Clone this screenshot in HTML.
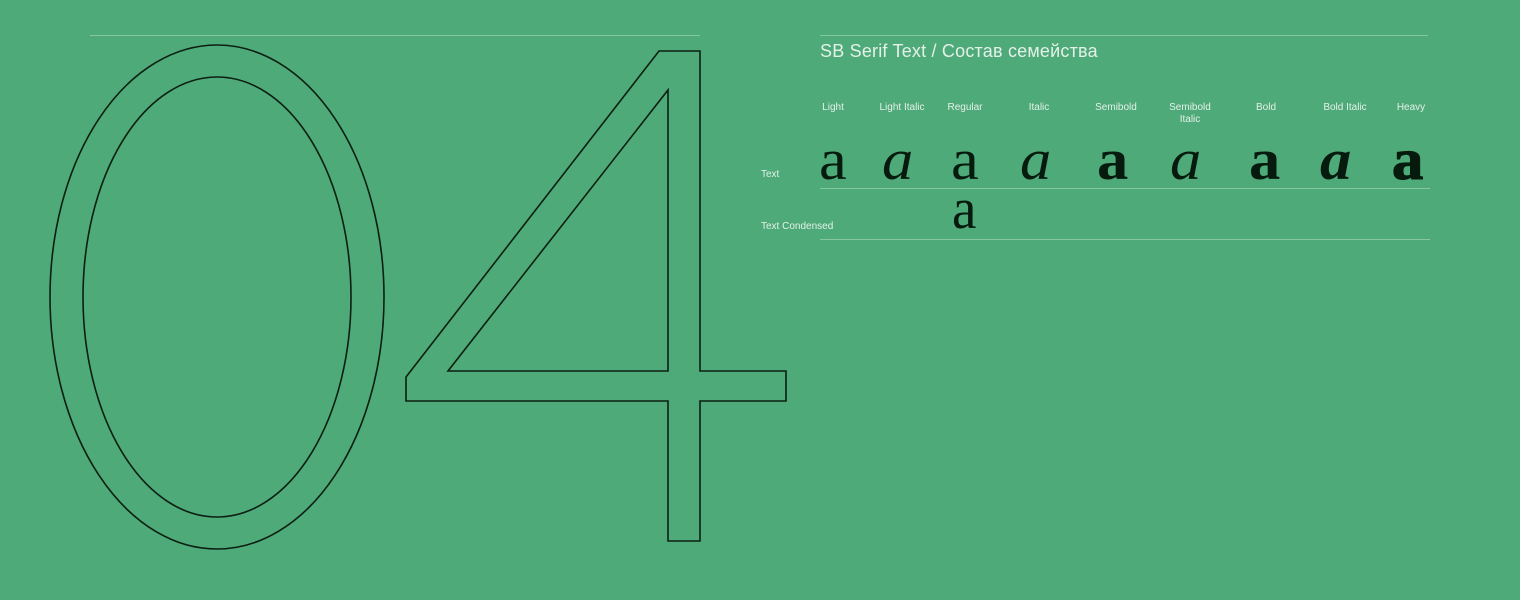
<!DOCTYPE html>
<html><head><meta charset="utf-8"><style>
html,body{margin:0;padding:0}
body{width:1520px;height:600px;background:#4eaa78;position:relative;overflow:hidden;font-family:"Liberation Sans",sans-serif}
.l{position:absolute;height:1px;background:#86c7a2}
.t{position:absolute;color:#e4f1e9}
.lab{position:absolute;top:102px;font-size:10px;color:#e4f1e9;text-align:center;width:80px;line-height:12px}
.a{position:absolute;top:131px;font-family:"Liberation Serif",serif;font-size:58px;line-height:58px;color:#061a0e;transform:scaleX(1.08);transform-origin:left}
</style></head><body>
<div class="l" style="left:90px;top:35px;width:610px"></div>
<div class="l" style="left:820px;top:35px;width:608px"></div>
<div class="l" style="left:820px;top:188px;width:610px"></div>
<div class="l" style="left:820px;top:239px;width:610px"></div>
<svg width="1520" height="600" style="position:absolute;left:0;top:0" fill="none" stroke="#0c1f12" stroke-width="1.6">
<ellipse cx="217" cy="297" rx="167" ry="252"/>
<ellipse cx="217" cy="297" rx="134" ry="220"/>
<path d="M659 51 L700 51 L700 371 L786 371 L786 401 L700 401 L700 541 L668 541 L668 401 L406 401 L406 377 Z"/>
<path d="M668 90 L668 371 L448 371 Z"/>
</svg>
<div class="t" style="left:820px;top:40px;font-size:18px;line-height:22px;letter-spacing:0.2px">SB Serif Text / Состав семейства</div>
<div class="lab" style="left:793px">Light</div>
<div class="lab" style="left:862px">Light Italic</div>
<div class="lab" style="left:925px">Regular</div>
<div class="lab" style="left:999px">Italic</div>
<div class="lab" style="left:1076px">Semibold</div>
<div class="lab" style="left:1150px">Semibold<br>Italic</div>
<div class="lab" style="left:1226px">Bold</div>
<div class="lab" style="left:1305px">Bold Italic</div>
<div class="lab" style="left:1371px">Heavy</div>
<div class="t" style="left:761px;top:169px;font-size:10px">Text</div>
<div class="t" style="left:761px;top:221px;font-size:10px">Text Condensed</div>
<div class="a" style="left:819px;font-weight:300">a</div>
<div class="a" style="left:882px;font-style:italic">a</div>
<div class="a" style="left:951px">a</div>
<div class="a" style="left:1020px;font-style:italic">a</div>
<div class="a" style="left:1097px;font-weight:bold">a</div>
<div class="a" style="left:1170px;font-style:italic">a</div>
<div class="a" style="left:1249px;font-weight:bold">a</div>
<div class="a" style="left:1320px;font-weight:bold;font-style:italic">a</div>
<div class="a" style="left:1392px;font-weight:900;-webkit-text-stroke:1.2px #061a0e">a</div>
<div class="a" style="left:952px;top:180px;transform:scaleX(.95)">a</div>
</body></html>
